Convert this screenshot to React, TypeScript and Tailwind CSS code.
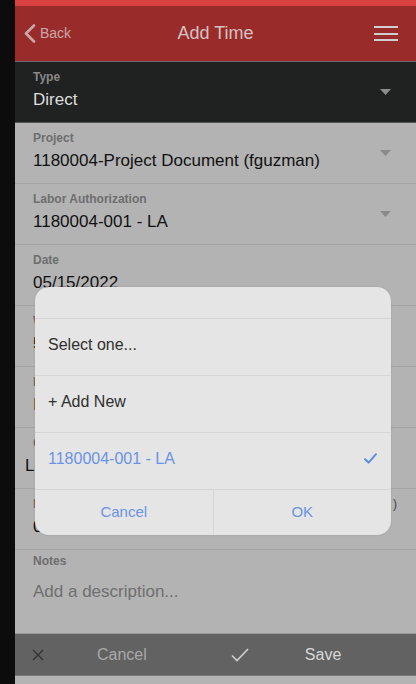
import React from "react";

const font = { fontFamily: '"Liberation Sans", Arial, sans-serif' };

// 入力フィールドの行（ダイアログの背後で暗くなっている）
function FieldRow({
  label,
  value,
  caret,
  right,
  indent = "pl-[18px]",
}: {
  label: string;
  value: string;
  caret?: boolean;
  right?: string;
  indent?: string;
}) {
  return (
    <div className="flex h-[61px] items-center border-b border-[#a5a5a5] pr-[25px]">
      <div className="mb-[4px] flex min-w-0 flex-1 flex-col">
        <div className="flex pl-[18px]">
          <span className="flex-1 text-[12px] font-bold leading-[16px] text-[#6e6e6e]">{label}</span>
          {right && <span className="-mr-[6px] text-[12px] leading-[16px] text-[#444]">{right}</span>}
        </div>
        <div className={`mt-[3px] truncate text-[17px] leading-[24px] text-[#111] ${indent}`}>{value}</div>
      </div>
      {caret && <Caret color="#8a8a8a" />}
    </div>
  );
}

function Caret({ color }: { color: string }) {
  return (
    <svg width="11" height="6" viewBox="0 0 11 6">
      <path d="M0 0h11L5.5 6z" fill={color} />
    </svg>
  );
}

function PickerDialog() {
  return (
    <div className="absolute left-[20px] top-[287px] w-[356px] overflow-hidden rounded-[14px] bg-[#e5e5e5] shadow-[0_0_2px_rgba(0,0,0,0.15)]">
      <div className="h-[32px] border-b border-[#d6d6d6]" />
      <div className="flex h-[57px] items-center border-b border-[#d6d6d6] px-[13px] pb-[5px] text-[16px] text-[#2f2f2f]">
        Select one...
      </div>
      <div className="flex h-[57px] items-center border-b border-[#d6d6d6] px-[13px] pb-[5px] text-[16px] text-[#2f2f2f]">
        + Add New
      </div>
      <div className="flex h-[57px] items-center justify-between border-b border-[#d6d6d6] pb-[5px] pl-[13px] pr-[14px] text-[16px] text-[#6a93e6]">
        <span>1180004-001 - LA</span>
        <svg width="13" height="11" viewBox="0 0 13 11">
          <path d="M1 6.2l3.6 3.4L12 1.2" fill="none" stroke="#5d8be6" strokeWidth="2" strokeLinecap="round" strokeLinejoin="round" />
        </svg>
      </div>
      <div className="flex h-[45px] text-[15px] text-[#6a93e6]">
        <div className="flex flex-1 items-center justify-center border-r border-[#d6d6d6]">Cancel</div>
        <div className="flex flex-1 items-center justify-center">OK</div>
      </div>
    </div>
  );
}

export default function App() {
  return (
    <div className="flex h-[684px] w-[416px] overflow-hidden bg-[#0c0c0c]" style={font}>
      <div className="w-[15px] shrink-0 bg-[#0c0c0c]" />
      <div className="relative flex flex-1 flex-col bg-[#b3b3b3]">
        {/* ヘッダー */}
        <div className="h-[6px] bg-[#da4242]" />
        <div className="relative flex h-[56px] items-center border-b border-[#6b6b6b] bg-[#992b2b]">
          <div className="flex items-center pl-[9px] text-[14px] text-[#c9a9a9]">
            <svg width="12" height="19" viewBox="0 0 12 19" className="mr-[4px]">
              <path d="M10 1.5L2 9.5l8 8" fill="none" stroke="#c9a7a7" strokeWidth="2.6" strokeLinecap="round" strokeLinejoin="round" />
            </svg>
            Back
          </div>
          <div className="absolute inset-x-0 text-center text-[18px] text-[#d3c2c2]">Add Time</div>
          <div className="ml-auto mr-[18px] flex flex-col gap-[4.5px]">
            <div className="h-[2px] w-[24px] bg-[#cfcfcf]" />
            <div className="h-[2px] w-[24px] bg-[#cfcfcf]" />
            <div className="h-[2px] w-[24px] bg-[#cfcfcf]" />
          </div>
        </div>

        {/* Type */}
        <div className="flex h-[61px] items-center border-b border-[#555] bg-[#202121] pr-[25px]">
          <div className="mb-[4px] flex flex-1 flex-col pl-[18px]">
            <span className="text-[12px] font-bold leading-[16px] text-[#888]">Type</span>
            <span className="mt-[3px] text-[17px] leading-[24px] text-[#dedede]">Direct</span>
          </div>
          <Caret color="#8c8c8c" />
        </div>

        <FieldRow label="Project" value="1180004-Project Document (fguzman)" caret />
        <FieldRow label="Labor Authorization" value="1180004-001 - LA" caret />
        <FieldRow label="Date" value="05/15/2022" />
        <FieldRow label="W" value="5" />
        <FieldRow label="L" value="I" />
        <FieldRow label="C" value="La" indent="pl-[10px]" />
        <FieldRow label="H" value="0" right=")" />

        {/* Notes */}
        <div className="flex h-[83px] flex-col pl-[18px] pt-[3px]">
          <span className="text-[12px] font-bold leading-[16px] text-[#6e6e6e]">Notes</span>
          <span className="mt-[11px] text-[17px] leading-[24px] text-[#6f6f6f]">Add a description...</span>
        </div>

        {/* 下部ツールバー */}
        <div className="flex h-[42px] items-center border-t border-[#9a9a9a] bg-[#626262] text-[16px]">
          <svg width="12" height="12" viewBox="0 0 12 12" className="ml-[17px]">
            <path d="M1 1l10 10M11 1L1 11" stroke="#333" strokeWidth="1.4" />
          </svg>
          <span className="ml-[53px] text-[#a9a9a9]">Cancel</span>
          <svg width="18" height="14" viewBox="0 0 18 14" className="ml-[84px]">
            <path d="M1 7.5l5 5L17 1" fill="none" stroke="#cfcfcf" strokeWidth="1.6" />
          </svg>
          <span className="ml-[56px] text-[#d8d8d8]">Save</span>
        </div>
        <div className="flex-1 border-t border-[#7a7a7a] bg-[#b3b3b3]" />

        <PickerDialog />
      </div>
    </div>
  );
}
